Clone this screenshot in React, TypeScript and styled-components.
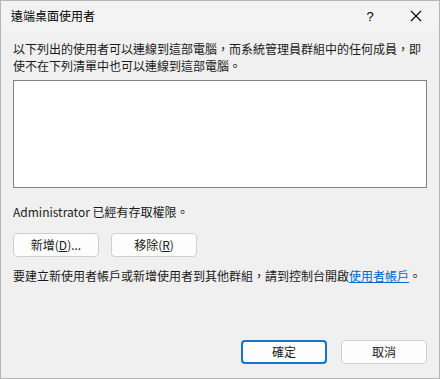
import styled, { createGlobalStyle } from "styled-components";

const GlobalStyle = createGlobalStyle`
  html, body {
    margin: 0;
    padding: 0;
    background: #f0f0f0;
  }
  body {
    font-family: "Noto Sans CJK TC", "Noto Sans", "Liberation Sans", sans-serif;
    font-size: 12px;
    color: #1a1a1a;
  }
`;

const Window = styled.div`
  width: 440px;
  height: 379px;
  box-sizing: border-box;
  border: 1px solid #b4b4b4;
  background: #f0f0f0;
  display: flex;
  flex-direction: column;
`;

const TitleBar = styled.div`
  height: 30px;
  background: #f3f3f3;
  display: flex;
  align-items: center;
`;

const Title = styled.div`
  flex: 1;
  padding-left: 10px;
  font-size: 12px;
  line-height: 30px;
  color: #000;
`;

const CaptionButton = styled.div`
  width: 46px;
  height: 30px;
  display: flex;
  align-items: center;
  justify-content: center;
  font-family: "Liberation Sans", sans-serif;
  font-size: 13px;
  color: #000;
`;

const Body = styled.div`
  flex: 1;
  padding: 9px 12px 14px 12px;
  display: flex;
  flex-direction: column;
`;

const Text = styled.p<{ $top?: number }>`
  margin: ${(p) => p.$top ?? 0}px 0 0 0;
  line-height: 17px;
  white-space: nowrap;
`;

const ListBox = styled.div`
  margin-top: 6px;
  height: 108px;
  box-sizing: border-box;
  border: 1px solid #828282;
  background: #fff;
`;

const ButtonRow = styled.div<{ $end?: boolean; $gap: number }>`
  display: flex;
  gap: ${(p) => p.$gap}px;
  justify-content: ${(p) => (p.$end ? "flex-end" : "flex-start")};
`;

const Button = styled.button<{ $primary?: boolean }>`
  width: 86px;
  height: 24px;
  box-sizing: border-box;
  padding: 0;
  margin: 0;
  border-radius: 4px;
  background: #fdfdfd;
  border: ${(p) => (p.$primary ? "2px solid #1a73c8" : "1px solid #d0d0d0")};
  font-family: inherit;
  font-size: 12px;
  color: #1a1a1a;
  line-height: 1;
  display: flex;
  align-items: center;
  justify-content: center;
`;

const Link = styled.a`
  color: #0066cc;
  text-decoration: underline;
`;

const Footer = styled.div`
  margin-top: auto;
`;

export default function App() {
  return (
    <>
      <GlobalStyle />
      <Window>
        <TitleBar>
          <Title>遠端桌面使用者</Title>
          <CaptionButton>?</CaptionButton>
          <CaptionButton>
            <svg width="12" height="12" viewBox="0 0 12 12">
              <path d="M1 1 L11 11 M11 1 L1 11" stroke="#000" strokeWidth="1.1" />
            </svg>
          </CaptionButton>
        </TitleBar>
        <Body>
          <Text>
            以下列出的使用者可以連線到這部電腦，而系統管理員群組中的任何成員，即
            <br />
            使不在下列清單中也可以連線到這部電腦。
          </Text>
          <ListBox />
          <Text $top={15}>Administrator 已經有存取權限。</Text>
          <Text $top={13} as="div">
            <ButtonRow $gap={12}>
              <Button>
                新增(<u>D</u>)...
              </Button>
              <Button>
                移除(<u>R</u>)
              </Button>
            </ButtonRow>
          </Text>
          <Text $top={10}>
            要建立新使用者帳戶或新增使用者到其他群組，請到控制台開啟<Link>使用者帳戶</Link>。
          </Text>
          <Footer>
            <ButtonRow $end $gap={14}>
              <Button $primary>確定</Button>
              <Button>取消</Button>
            </ButtonRow>
          </Footer>
        </Body>
      </Window>
    </>
  );
}
